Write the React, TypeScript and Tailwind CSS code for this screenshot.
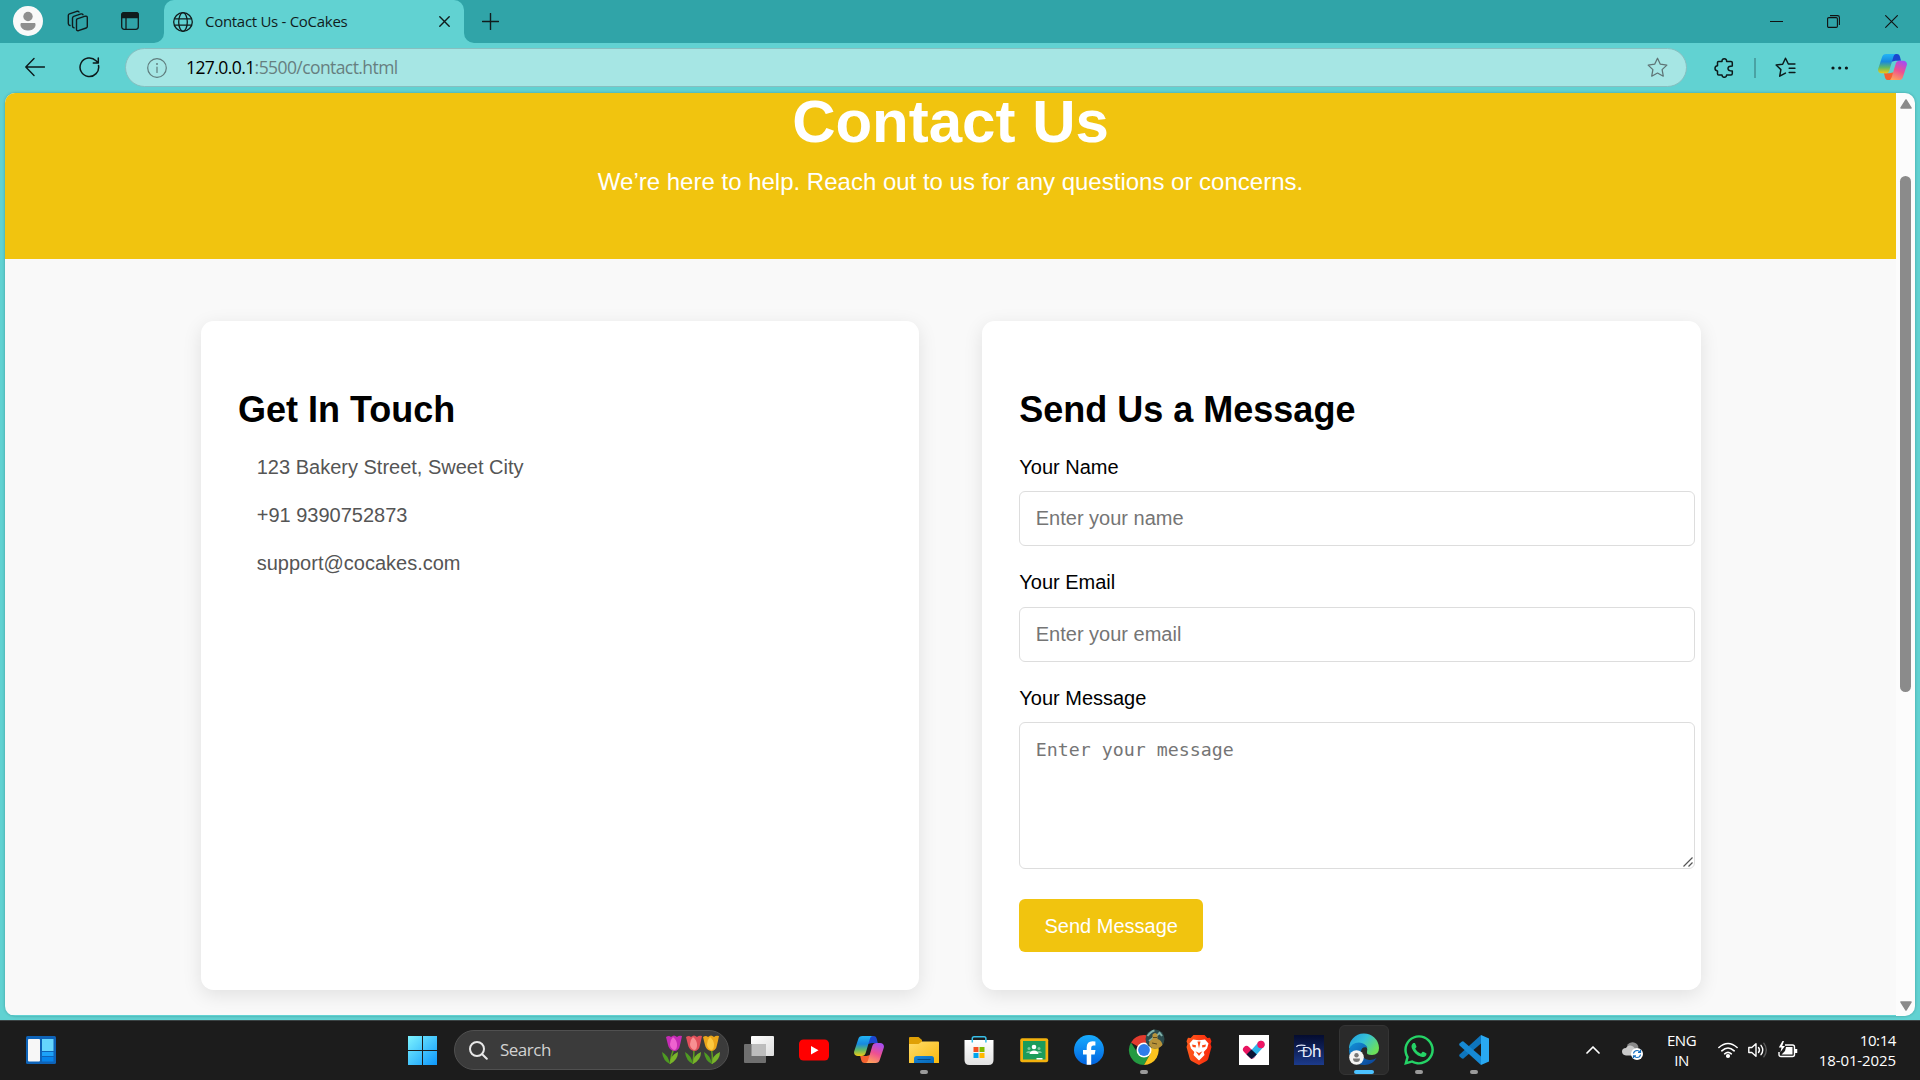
import React from "react";
import { FaWhatsapp } from "react-icons/fa";

type Kids = { children?: React.ReactNode };

const ui = "font-['Open_Sans','Noto_Sans',sans-serif]";

function Line({ size = 20, sw = 1.25, className = "", box = 20, children }: Kids & { size?: number; sw?: number; className?: string; box?: number }) {
  return (
    <svg width={size} height={size} viewBox={`0 0 ${box} ${box}`} fill="none" stroke="currentColor" strokeWidth={sw} strokeLinecap="round" strokeLinejoin="round" className={`block shrink-0 ${className}`}>
      {children}
    </svg>
  );
}

function Copilot({ id, size }: { id: string; size: number }) {
  return (
    <svg width={size} height={size * 0.9} viewBox="0 0 30 27" className="block shrink-0">
      <defs>
        <linearGradient id={`${id}a`} x1="0" y1="0" x2="0" y2="1">
          <stop offset="0" stopColor="#22b4f5" />
          <stop offset="0.4" stopColor="#1789df" />
          <stop offset="0.7" stopColor="#62b965" />
          <stop offset="1" stopColor="#f2cb13" />
        </linearGradient>
        <linearGradient id={`${id}b`} x1="0.7" y1="0" x2="0.3" y2="1">
          <stop offset="0" stopColor="#a64df0" />
          <stop offset="0.5" stopColor="#ee5091" />
          <stop offset="1" stopColor="#ffa35b" />
        </linearGradient>
      </defs>
      <path d="M15 0h4.500c2 0 2.800 1.200 3.300 3l1 4H18l-4 1z" fill="#1b47cf" />
      <path d="M15 27h-4.500c-2 0-2.800-1.200-3.300-3l-1-4h6l4-1z" fill="#f4622f" />
      <path d="M8.500 0H19c-2 0-2.700 1.500-3.300 3.500L12 16c-.8 2.800-1.700 4-4.500 4H4c-3 0-4.600-2-3.700-5L4.200 3.200C4.900 1 6 0 8.500 0z" fill={`url(#${id}a)`} />
      <path d="M21.500 27H11c2 0 2.700-1.500 3.300-3.500L18 11c.8-2.800 1.700-4 4.500-4H26c3 0 4.600 2 3.700 5l-3.900 11.800c-.7 2.200-1.800 3.200-4.300 3.200z" fill={`url(#${id}b)`} />
    </svg>
  );
}

function TabStrip() {
  return (
    <div className="flex h-[43px] bg-[#30a4a8] text-[#101c1d]">
      <div className="flex w-[164px] items-center pl-[13px]">
        <svg width="30" height="30" viewBox="0 0 30 30" className="-mt-px block">
          <circle cx="15" cy="15" r="15" fill="#f9f9f9" />
          <circle cx="15" cy="10.500" r="4.700" fill="#8f8f8f" />
          <path d="M8 17.500h14v1.500c0 3-3 5-7 5s-7-2-7-5z" fill="#8f8f8f" stroke="#8f8f8f" strokeLinejoin="round" />
        </svg>
        <Line size={22} box={22} sw={1.4} className="ml-[24px] -mt-px">
          <path d="M10.200 8.800 18.200 6.200Q20.300 5.700 20.300 7.600V16.500Q20.300 17.600 19.200 18L11.400 20.700Q9.500 21 9.500 19.200V10Q9.500 9.200 10.200 8.800z" />
          <path d="M7 17.800Q5.500 17.600 5.500 16V8Q5.500 6.800 6.700 6.300L14 3.900Q15.600 3.600 16 4.800" />
          <path d="M3 15.500Q1.300 15 1.300 13.400V5.500Q1.300 4.300 2.500 3.900L9.800 1.300Q11.400 1 12 2" />
        </Line>
        <svg width="18" height="18" viewBox="0 0 18 18" className="-mt-px ml-[32px] block" fill="none" stroke="currentColor" strokeWidth="1.300">
          <rect x=".7" y=".7" width="16.600" height="16.600" rx="2.500" />
          <path d="M.7 5.500V3Q.7.700 3 .7h12Q17.300.7 17.300 3v2.500z" fill="currentColor" />
          <path d="M5 5v12" />
        </svg>
      </div>
      <div className="relative flex w-[300px] items-center rounded-t-[10px] bg-[#61d2d2] pl-[9px]">
        <svg width="10" height="10" className="absolute bottom-0 -left-[10px]"><path d="M10 0v10H0A10 10 0 0 0 10 0z" fill="#61d2d2" /></svg>
        <svg width="10" height="10" className="absolute -right-[10px] bottom-0"><path d="M0 0v10h10A10 10 0 0 1 0 0z" fill="#61d2d2" /></svg>
        <Line size={20} sw={1.300}>
          <circle cx="10" cy="10" r="9.300" />
          <ellipse cx="10" cy="10" rx="4.300" ry="9.300" />
          <path d="M1.600 6.800h16.800M1.600 13.200h16.800" />
        </Line>
        <span className={`-mt-[2px] ml-[12px] w-[234px] whitespace-nowrap text-[15px] leading-[20px] tracking-[-0.290px] ${ui}`}>Contact Us - CoCakes</span>
        <Line size={11} box={11} sw={1.400}><path d="M.8.8l9.400 9.400M10.200.8.8 10.200" /></Line>
      </div>
      <div className="flex grow items-center pl-[18px]">
        <Line size={17} box={17} sw={1.400} className="-mt-px"><path d="M8.500.5v16M.5 8.500h16" /></Line>
        <div className="ml-auto flex items-center">
          <svg width="13" height="13" className="block"><path d="M0 6.500h13" stroke="#111" strokeWidth="1" /></svg>
          <svg width="13" height="13" viewBox="0 0 13 13" className="ml-[44px] block" fill="none" stroke="#111" strokeWidth="1.100">
            <rect x=".6" y="2.600" width="9.800" height="9.800" rx="1.200" />
            <path d="M3 .6h7.500q1.900 0 1.900 1.900V10" />
          </svg>
          <svg width="13" height="13" className="mr-[22px] ml-[45px] block"><path d="M.3.3l12.400 12.400M12.700.3.300 12.700" stroke="#111" strokeWidth="1.100" /></svg>
        </div>
      </div>
    </div>
  );
}

const star = "M10 1.200l2.700 5.700 6.200.8-4.500 4.300 1.100 6.300L10 15.300l-5.500 3 1.100-6.300L1.100 7.700l6.200-.8z";

function Toolbar() {
  return (
    <div className="flex h-[50px] items-center bg-[#61d2d2] pb-px text-[#0c1a1b]">
      <Line size={20} sw={1.400} className="-mt-px ml-[25px]"><path d="M9 1.500.8 10 9 18.500M1 10h18.500" /></Line>
      <Line size={21} box={21} sw={1.500} className="ml-[34px]"><path d="M19.500 8.500A9.300 9.300 0 1 1 17 3.700l2 2M19.300 1v5h-5" /></Line>
      <div className="ml-[25px] flex h-[39px] w-[1562px] items-center rounded-full border border-[#86bfc0] bg-[#a6e6e4]">
        <Line size={20} sw={1.200} className="ml-[21px] text-[#5f7c7d]">
          <circle cx="10" cy="10" r="9.300" />
          <path d="M10 9v5.500" />
          <circle cx="10" cy="6" r=".4" />
        </Line>
        <span className={`-mt-px ml-[19px] text-[17.500px] leading-[24px] tracking-[-0.580px] whitespace-nowrap text-[#667f80] ${ui}`}>
          <span className="text-black">127.0.0.1</span>:5500/contact.html
        </span>
        <Line size={21} className="mr-[18px] ml-auto text-[#5f7475]" sw={1.200}><path d={star} /></Line>
      </div>
      <Line size={20} className="ml-[27px]" sw={1.500}>
        <path d="M4.500 3.500H8Q7.800.8 10.300.8T12.600 3.500H17Q18.300 3.500 18.300 4.800V8Q14 8 14 10.500T18.300 13V15.500Q18.300 17 17 17H12.600Q12.600 19.300 10.300 19.300T8 17H4.700Q3.500 17 3.500 15.700V12.900Q1 12.800 1 10.300T3.500 7.700V4.500Q3.500 3.500 4.500 3.500z" />
      </Line>
      <div className="ml-[20px] h-[20px] w-[2px] bg-[#4aa2a4]" />
      <Line size={21} className="ml-[19px]" sw={1.400}>
        <path d="M12.700 6.700 10 1.200 7.300 6.900l-6.200.8 4.500 4.300-1.100 6.300 5.400-3M12.700 6.700H19M13.500 10.700H19M13.500 14.700H19" />
      </Line>
      <svg width="18" height="4" viewBox="0 0 18 4" className="ml-[35px] block" fill="currentColor">
        <circle cx="2" cy="2" r="1.600" /><circle cx="8.700" cy="2" r="1.600" /><circle cx="15.400" cy="2" r="1.600" />
      </svg>
      <div className="ml-[29px]"><Copilot id="bar" size={29} /></div>
    </div>
  );
}

function Field({ label, children }: Kids & { label: string }) {
  return (
    <label className="block">
      <span className="mb-[12.500px] block leading-[23px] text-black">{label}</span>
      {children}
    </label>
  );
}

const card = "h-[669px] rounded-[12.500px] bg-white px-[37.500px] pt-[68px] shadow-[0_5px_19px_rgba(0,0,0,0.100)]";
const heading = "mb-[25.750px] text-[36px] leading-[41px] font-bold text-black";
const input = "block w-[676px] rounded-[6px] border border-[#dddddd] bg-white px-[15.500px] outline-none placeholder:text-[#757575]";

function ContactPage() {
  return (
    <div className="h-[922px] w-[1891px] overflow-hidden bg-[#f9f9f9] font-['Liberation_Sans',Arial,sans-serif] text-[20px]">
      <header className="h-[166px] bg-[#f1c40f] text-center text-white">
        <h1 className="h-[75px] text-[60px] leading-[57px] font-bold">Contact Us</h1>
        <p className="text-[24px] leading-[28px]">We’re here to help. Reach out to us for any questions or concerns.</p>
      </header>
      <main className="mx-auto mt-[62px] grid w-[1500px] grid-cols-2 gap-[62.500px]">
        <section className={card}>
          <h2 className={heading}>Get In Touch</h2>
          <div className="flex flex-col gap-[25px] pl-[18.750px] leading-[23px] text-[#555]">
            <p>123 Bakery Street, Sweet City</p>
            <p>+91 9390752873</p>
            <p>support@cocakes.com</p>
          </div>
        </section>
        <section className={card}>
          <h2 className={heading}>Send Us a Message</h2>
          <form className="flex flex-col gap-[25px]">
            <Field label="Your Name">
              <input className={`h-[55px] ${input}`} placeholder="Enter your name" />
            </Field>
            <Field label="Your Email">
              <input className={`h-[55px] ${input}`} placeholder="Enter your email" />
            </Field>
            <Field label="Your Message">
              <div className="relative w-[676px]">
                <textarea className={`h-[147px] resize-none pt-[15px] font-['DejaVu_Sans_Mono',monospace] text-[18.270px] leading-[23px] ${input}`} placeholder="Enter your message" />
                <svg width="10" height="10" className="absolute right-[2px] bottom-[2px]"><path d="M.5 9.500l9-9M5.500 9.500l4-4" stroke="#555" strokeWidth="1.200" /></svg>
              </div>
            </Field>
            <button type="button" className="mt-[5px] h-[53px] w-[184px] rounded-[6px] bg-[#f1c40f] text-white">Send Message</button>
          </form>
        </section>
      </main>
    </div>
  );
}

function Scrollbar() {
  return (
    <div className="flex w-[19px] flex-col items-center bg-[#fcfcfc] pt-[6px] pb-[5px]">
      <svg width="12" height="10"><path d="M6 1 11 9H1z" fill="#8b8b8b" stroke="#8b8b8b" strokeWidth="1.500" strokeLinejoin="round" /></svg>
      <div className="mt-[67px] h-[516px] w-[11px] rounded-full bg-[#8b8b8b]" />
      <svg width="12" height="10" className="mt-auto"><path d="M6 9 1 1h10z" fill="#8b8b8b" stroke="#8b8b8b" strokeWidth="1.500" strokeLinejoin="round" /></svg>
    </div>
  );
}

function Cell({ children, dot }: Kids & { dot?: boolean }) {
  return (
    <div className="relative flex h-full w-[55px] shrink-0 items-center justify-center pb-px">
      {children}
      {dot && <div className="absolute bottom-[6px] h-[4px] w-[8px] rounded-full bg-[#9a9a9a]" />}
    </div>
  );
}

function Ico({ children }: Kids) {
  return <svg width="30" height="30" viewBox="0 0 30 30" className="block shrink-0 overflow-visible">{children}</svg>;
}

function Tulip({ x, a, b, lean }: { x: number; a: string; b: string; lean: number }) {
  return (
    <g transform={`translate(${x} 0)`}>
      <path d={`M${9 + lean} 13Q9 20 8 29`} stroke="#5d9c1e" strokeWidth="1.500" fill="none" />
      <path d="M8 29Q1 26 0 17q6 3 8 12z" fill="#4e9a22" />
      <path d="M8 29q0-9 8-12 0 8-8 12z" fill="#7ab52a" />
      <g transform={`translate(${lean} 0)`}>
        <path d="M1 2q3-2 5 0 3-3 6 0 2-2 5-1-1 5-2 9-1 6-6 6-5-1-6-6z" fill={a} />
        <path d="M8 2q4 3 4 8t-3 5q-4-2-4-6t3-7z" fill={b} />
      </g>
    </g>
  );
}

function TaskIcons() {
  return (
    <>
      <Cell><Ico>
        <defs><linearGradient id="tv" x1="0" y1="0" x2="1" y2="1"><stop stopColor="#fff" /><stop offset="1" stopColor="#dcdcdc" /></linearGradient></defs>
        <rect x="7" y="1" width="23" height="20" rx="1" fill="url(#tv)" />
        <rect x="0" y="9" width="22" height="19" rx="1" fill="#6f6f6f" />
        <path d="M7.500 9H22v12H7.500z" fill="#bdbdbd" />
      </Ico></Cell>
      <Cell><Ico><rect y="4.500" width="30" height="21" rx="4.500" fill="#f00" /><path d="M12 11v8.500l7.500-4.250z" fill="#fff" /></Ico></Cell>
      <Cell><div className="-mt-[2px]"><Copilot id="task" size={30} /></div></Cell>
      <Cell dot><Ico>
        <defs><linearGradient id="fo" x1="0" y1="0" x2="1" y2="1"><stop stopColor="#ffdc6a" /><stop offset="1" stopColor="#f9b90d" /></linearGradient>
          <linearGradient id="fb" x1="0" y1="0" x2="1" y2="1"><stop stopColor="#1a86d6" /><stop offset="1" stopColor="#0568ba" /></linearGradient></defs>
        <path d="M0 3q0-1 1-1h8.500L13 5v5H0z" fill="#dfa006" />
        <path d="M0 9h9.500L13 6.500h16q1 0 1 1V28H0z" fill="url(#fo)" />
        <path d="M5 28v-4.500q0-2.500 2.500-2.500h15Q25 21 25 23.500V28z" fill="url(#fb)" />
        <path d="M8.500 24.500h13" stroke="#064b86" strokeWidth="1" />
      </Ico></Cell>
      <Cell><Ico>
        <defs><linearGradient id="ms" x1="0" y1="0" x2="0" y2="1"><stop stopColor="#fff" /><stop offset="1" stopColor="#e2e2e2" /></linearGradient></defs>
        <path d="M.5 5h29v20q0 5-5 5h-19q-5 0-5-5z" fill="url(#ms)" />
        <path d="M8.300 7.500v-4q0-1.800 1.800-1.800h10q1.800 0 1.800 1.800v4" fill="none" stroke="#38bfe8" strokeWidth="1.500" />
        <path d="M9.500 12h5v5h-5z" fill="#f25022" /><path d="M15.500 12h5v5h-5z" fill="#7fba00" />
        <path d="M9.500 18h5v5h-5z" fill="#00a4ef" /><path d="M15.500 18h5v5h-5z" fill="#ffb900" />
      </Ico></Cell>
      <Cell><Ico>
        <rect x="1.200" y="3.200" width="28" height="24" rx="2" fill="#f2b10d" />
        <path d="M4 6h22.500v18.500H4z" fill="#1c9c5b" />
        <circle cx="15" cy="12" r="2.300" fill="#fff" /><circle cx="10" cy="13.500" r="1.500" fill="#7cc9a0" /><circle cx="20" cy="13.500" r="1.500" fill="#7cc9a0" />
        <path d="M7 18q.5-2 3-2t3 2zM17 18q.5-2 3-2t3 2z" fill="#7cc9a0" />
        <path d="M10.500 19q.5-3.500 4.500-3.500t4.500 3.500z" fill="#fff" /><path d="M17.500 23h6v1.500h-6z" fill="#fff" />
      </Ico></Cell>
      <Cell><Ico>
        <defs><linearGradient id="fbk" x1="0" y1="0" x2="0" y2="1"><stop stopColor="#18acfe" /><stop offset="1" stopColor="#0163e0" /></linearGradient></defs>
        <circle cx="15" cy="15" r="15" fill="url(#fbk)" />
        <path d="M12.700 29.800V19.500H9V15h3.700v-2.500q0-6.200 5.800-6.200 1.600 0 2.900.3v3.900h-2q-2.200 0-2.200 2.200V15h4.300l-.8 4.500h-3.500v10.300z" fill="#fff" />
      </Ico></Cell>
      <Cell dot><Ico>
        <path d="M15 15 2 7.500A15 15 0 0 1 28 7.500L15 8z" fill="#e33b2e" />
        <path d="M15 15 9 18.500 2 7.500A15 15 0 0 0 15 30l6.500-11.500z" fill="#249a41" />
        <path d="M15 8h13a15 15 0 0 1-13 22l6.500-11.500z" fill="#fcc31e" />
        <circle cx="15" cy="15" r="7.500" fill="#fff" /><circle cx="15" cy="15" r="5.900" fill="#2f7de9" />
        <circle cx="26" cy="4" r="9.500" fill="#2c4b4d" />
        <path d="M18.500 1q4-5 7-5.500M20 6l11-8M30-3l3 4" stroke="#7fb0a9" strokeWidth="2" />
        <path d="M23.500-.5q2.500-3 5 0V4q4 1 5 6-3 3.500-7.500 3.500T20 9q0-3 3.500-5z" fill="#b8933a" />
        <path d="M24 2.500h4M23 8l5 1" stroke="#5d4a1c" />
      </Ico></Cell>
      <Cell><Ico>
        <defs><linearGradient id="br" x1="0" y1="0" x2="1" y2="0"><stop stopColor="#ff5a1c" /><stop offset="1" stopColor="#f8280c" /></linearGradient></defs>
        <path d="M9.500 0h11l2.800 3 2.700-.3 1.500 3.500-1 2.800 1 3-3.200 11.500q-.5 1.500-1.800 2.500L15 30l-7.500-4Q6.200 25 5.700 23.500L2.500 12l1-3-1-2.800L4 2.700 6.700 3z" fill="url(#br)" />
        <path d="M9 4.500 15 5.200l6-.7 3.500 4-1.500 5-3.300 3.500.8 3L15 25.500 9.500 20l.8-3L7 13.500l-1.500-5z" fill="#fff" />
        <path d="M8 9.500l4 .7-.3 2.300-3-.5zM22 9.500l-4 .7.3 2.300 3-.5zM13.500 6.500l1.500 7 1.500-7zM11.500 16.300 15 18l3.500-1.700L15 21z" fill="#fb4a18" />
      </Ico></Cell>
      <Cell><Ico>
        <path d="M0 0h30v30H0z" fill="#fff" />
        <path d="M7.500 14.500 13 20" stroke="#e8135f" strokeWidth="7" strokeLinecap="round" />
        <path d="M22 9.500 13 19.500" stroke="#2fb6ea" strokeWidth="7" strokeLinecap="round" />
        <circle cx="22" cy="9.500" r="3.700" fill="#ee1764" />
        <path d="M12.500 14.500 17.800 19.500 12.500 24 7.500 19.500z" fill="#0b1535" />
      </Ico></Cell>
      <Cell><div className="relative flex h-[30px] w-[30px] items-center justify-end bg-linear-to-b from-[#050c30] to-[#1c3b8c] pr-[3px]">
        <span className="text-[17px] leading-none tracking-[-0.500px] font-['Lato',sans-serif] text-[#e9effd]"><span className="text-[14px]">D</span>h</span>
        <svg width="30" height="30" className="absolute inset-0"><path d="M2.500 12q1-2.500 9-1.500M4.500 17q-1-2 9-1" stroke="#e9effd" strokeWidth="1.200" fill="none" /></svg>
      </div></Cell>
      <Cell>
        <div className="flex h-[50px] w-[50px] shrink-0 items-center justify-center rounded-[6px] border border-[#343434] bg-[#2a2a2a]">
          <Ico>
            <defs>
              <linearGradient id="eg" x1="0" y1="0" x2="1" y2=".6"><stop stopColor="#1c9ae0" /><stop offset=".5" stopColor="#35c1d8" /><stop offset="1" stopColor="#6ce05a" /></linearGradient>
              <linearGradient id="eh" x1="0" y1="0" x2="1" y2="1"><stop stopColor="#1391d8" /><stop offset="1" stopColor="#0b3f94" /></linearGradient>
            </defs>
            <path d="M0 14A15 15 0 0 1 30 13q0 7-7 7-6 0-5-3 2-6-6-8Q4 8 0 14z" fill="url(#eg)" />
            <path d="M0 15Q2 7.500 10 7.500q6 .5 8.500 5-6-1.500-6.500 4 0 7 8 8.500 4 .5 7.500-2-4 7-12 7A15 15 0 0 1 0 15z" fill="url(#eh)" />
            <circle cx="7.500" cy="22.500" r="7.300" fill="#f4f4f4" /><circle cx="7.500" cy="20.200" r="2.200" fill="#777" />
            <path d="M4 23.500h7q0 3.500-3.500 3.500T4 23.500z" fill="#777" />
          </Ico>
        </div>
        <div className="absolute bottom-[6px] h-[4px] w-[20px] rounded-full bg-[#4cc2ff]" />
      </Cell>
      <Cell dot><FaWhatsapp size={34} className="shrink-0 text-[#25d366]" /></Cell>
      <Cell dot><Ico>
        <path d="M22 0 30 3.500v23L22 30z" fill="#29a9f2" />
        <path d="M22 0v8.500L4.500 23.500Q3.500 24 2.600 23.200L.6 21.400q-1-1 0-2z" fill="#0e75bd" />
        <path d="M22 30v-8.500L4.500 6.500Q3.500 6 2.600 6.800L.6 8.600q-1 1 0 2z" fill="#1689d4" />
      </Ico></Cell>
    </>
  );
}

function Taskbar() {
  return (
    <div className={`flex h-[60px] items-center border-t border-[#3b4344] bg-[#1c1c1c] text-white ${ui}`}>
      <svg width="30" height="28" viewBox="0 0 30 28" className="-mt-px ml-[26px] block">
        <rect width="30" height="28" rx="1.500" fill="#0e63b8" />
        <rect x="2" y="3" width="12" height="22.500" rx="1" fill="#f7f7f7" />
        <path d="M16 3h11.500v12H16z" fill="#66d6fd" /><path d="M16 16h11.500v4H16z" fill="#1da2f8" /><path d="M16 21h11.500v4.500H16z" fill="#0784ea" />
      </svg>
      <svg width="29" height="29" viewBox="0 0 29 29" className="ml-[352px] block">
        <defs><linearGradient id="win" gradientUnits="userSpaceOnUse" x1="0" y1="0" x2="29" y2="29"><stop stopColor="#7df3fe" /><stop offset="1" stopColor="#0d97fb" /></linearGradient></defs>
        <path d="M0 0h14v14H0zM15 0h14v14H15zM0 15h14v14H0zM15 15h14v14H15z" fill="url(#win)" />
      </svg>
      <div className="-mt-px ml-[17px] flex h-[40px] w-[275px] items-center rounded-full border border-[#505050] bg-[#3b3b3b]">
        <Line size={19} box={19} sw={2} className="ml-[14px] text-[#e8e8e8]"><circle cx="8" cy="8" r="7" /><path d="M13.200 13.200 17.800 17.800" /></Line>
        <span className="ml-[12px] text-[17px] leading-[24px] tracking-[-0.500px] text-[#d2d2d2]">Search</span>
        <svg width="60" height="30" className="mr-[7px] ml-auto block">
          <Tulip x={1} a="#c52bb4" b="#ee62cf" lean={3} />
          <Tulip x={24} a="#e0505a" b="#f79092" lean={0} />
          <Tulip x={43} a="#eba51a" b="#fcc83f" lean={-2} />
        </svg>
      </div>
      <div className="ml-[2.500px] flex h-full"><TaskIcons /></div>
      <div className="ml-auto flex items-center pb-[2px]">
        <Line size={14} box={14} sw={1.700}><path d="M1 10l6-6 6 6" /></Line>
        <svg width="21" height="18" viewBox="0 0 21 18" className="mt-[2px] ml-[22px] block">
          <path d="M5 3Q8-.5 12 .5t4.500 5L10 10z" fill="#8a8a8a" />
          <path d="M4 13.500Q0 13 0 9.500T4 6q1-3 4.500-2.500T13 7l2 6.500z" fill="#c9c9c9" />
          <circle cx="15" cy="12" r="6" fill="#fff" />
          <path d="M11.500 11.500q.5-3 3.500-3 2 0 3 1.500M18.500 12.500q-.5 3-3.500 3-2 0-3-1.500M18.500 7.800v2.500H16M11.500 16.300v-2.500H14" fill="none" stroke="#1670c0" strokeWidth="1.200" />
        </svg>
        <div className="ml-[23px] w-[31px] text-center text-[15px] leading-[20px] tracking-[-0.450px]"><div>ENG</div><div>IN</div></div>
        <Line size={20} sw={1.600} className="ml-[21px]">
          <path d="M.9 7.500q9.100-8 18.200 0M3.800 10.800q6.200-5.600 12.400 0M6.700 13.800q3.300-2.800 6.600 0" />
          <circle cx="10" cy="16" r="1.300" fill="currentColor" />
        </Line>
        <Line size={20} sw={1.400} className="ml-[10px]">
          <path d="M.8 7.500h3L8 3.700v12.600l-4.200-3.800h-3zM10.500 7.500q2 2.500 0 5M13 5.300q3.500 4.700 0 9.400" />
          <path d="M15.800 3.200q5 6.800 0 13.600" stroke="#5a5a5a" />
        </Line>
        <svg width="20" height="18" viewBox="0 0 20 18" className="ml-[10px] block" fill="none" stroke="#fff" strokeWidth="1.400">
          <path d="M7 4h7.500Q16.500 4 16.500 6v7.500q0 2-2 2H3q-2 0-2-2V11" />
          <path d="M8 6h6.500v7.500H3.500L7 10z" fill="#fff" stroke="none" /><path d="M18 8v4" strokeWidth="2.500" />
          <path d="M4.500 0 .8 6.500h2.700L2.500 11 7 5H4.200L6 0z" fill="#fff" stroke="none" />
        </svg>
        <div className="mr-[24px] ml-[20px] w-[78px] text-right text-[15px] leading-[20px] tracking-[-0.100px] whitespace-nowrap"><div className="tracking-[-0.400px]">10:14</div><div>18-01-2025</div></div>
      </div>
    </div>
  );
}

export default function App() {
  return (
    <div className="flex h-[1080px] w-[1920px] flex-col overflow-hidden bg-[#61d2d2]">
      <TabStrip />
      <Toolbar />
      <div className="mx-[5px] mb-[4px] flex h-[923px] w-[1910px] overflow-hidden rounded-[10px] shadow-[0_0_3px_rgba(0,60,60,0.350)]">
        <ContactPage />
        <Scrollbar />
      </div>
      <Taskbar />
    </div>
  );
}
